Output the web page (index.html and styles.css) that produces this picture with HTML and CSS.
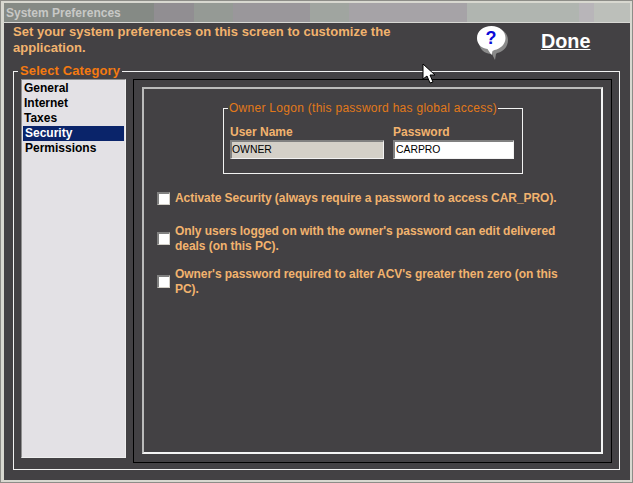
FILE: index.html
```html
<!DOCTYPE html>
<html lang="en">
<head>
<meta charset="utf-8">
<title>System Preferences</title>
<link rel="stylesheet" href="styles.css">
</head>
<body>
<div class="window">
  <div class="titlebar">System Preferences</div>
  <div class="client">
    <header class="intro">
      <p class="intro-text">Set your system preferences on this screen to customize the application.</p>
      <svg class="help" width="34" height="36" viewBox="0 0 34 36" aria-label="Help">
        <path class="help-shadow" d="M18 3c9 0 14 6 14 12 0 7-5 12-11 13l-1 1-1 6-3-6C8 29 3 24 3 16 3 8 9 3 18 3z"/>
        <path class="help-bubble" d="M15.500 1c8 0 14 5 14 12 0 6-5 11-11 12l-2 1-1 4-4-6C5 23 1 19 1 13 1 6 7 1 15.500 1z"/>
        <text class="help-mark" x="15" y="18.500" text-anchor="middle">?</text>
      </svg>
      <a class="done">Done</a>
    </header>
    <fieldset class="category">
      <legend>Select Category</legend>
      <ul class="list">
        <li>General</li>
        <li>Internet</li>
        <li>Taxes</li>
        <li class="selected">Security</li>
        <li>Permissions</li>
      </ul>
      <div class="panel">
        <div class="panel-inner">
          <fieldset class="logon">
            <legend>Owner Logon (this password has global access)</legend>
            <div class="field user">
              <label>User Name</label>
              <div class="input disabled">OWNER</div>
            </div>
            <div class="field">
              <label>Password</label>
              <div class="input">CARPRO</div>
            </div>
          </fieldset>
          <div class="option first"><span class="check"></span><span>Activate Security (always require a password to access CAR_PRO).</span></div>
          <div class="option second"><span class="check"></span><span>Only users logged on with the owner's password can edit delivered deals (on this PC).</span></div>
          <div class="option third"><span class="check"></span><span>Owner's password required to alter ACV's greater then zero (on this PC).</span></div>
        </div>
      </div>
    </fieldset>
  </div>
  <svg class="cursor" width="14" height="21" viewBox="0 0 14 21">
    <path d="M1 1v15l4-3 3 7 3-1-3-7h5z" fill="#fff" stroke="#000" stroke-width="1"/>
  </svg>
</div>
</body>
</html>
```

FILE: styles.css
```css
* { box-sizing: border-box; }
html, body { margin: 0; padding: 0; }
body {
  width: 633px;
  height: 483px;
  overflow: hidden;
  background: #434144;
  font-family: "Liberation Sans", Arial, sans-serif;
}
.window {
  position: relative;
  width: 633px;
  height: 483px;
  display: flex;
  flex-direction: column;
  border-style: solid;
  border-color: #d8d8d0;
  border-width: 3px 3px 3px 4px;
  outline: 1px solid #8d8d88;
  outline-offset: -1px;
}
.titlebar {
  height: 20px;
  flex: none;
  padding: 3px 0 0 2px;
  font-size: 12px;
  font-weight: 700;
  line-height: 14px;
  color: #c8c8c6;
  border-bottom: 1px solid #d8d8d4;
  background: linear-gradient(90deg,
    #858a85 0, #858a85 150px,
    #918e92 150px, #918e92 190px,
    #959a95 190px, #959a95 229px,
    #9a979b 229px, #9a979b 306px,
    #a0a5a0 306px, #a0a5a0 345px,
    #a6a3a7 345px, #a6a3a7 463px,
    #b0b5b0 463px, #b0b5b0 575px,
    #b8b5b9 575px, #b8b5b9 590px,
    #bcbfba 590px);
}
.client {
  flex: 1;
  display: flex;
  flex-direction: column;
  min-height: 0;
  padding: 0 10px 10px 9px;
  background: #434144;
}
.intro {
  height: 40px;
  flex: none;
  display: flex;
  align-items: flex-start;
}
.intro-text {
  width: 396px;
  margin: 1px 0 0;
  font-size: 13px;
  line-height: 16px;
  font-weight: 700;
  letter-spacing: 0.03px;
  color: #f2b36e;
}
.help {
  flex: none;
  margin: 2px 0 0 67px;
}
.help-shadow { fill: #8a8a8a; }
.help-bubble { fill: #fff; }
.help-mark {
  font-size: 18px;
  font-weight: 700;
  fill: #0a0ad8;
  font-family: "Liberation Sans", Arial, sans-serif;
}
.done {
  margin: 6px 0 0 31px;
  font-size: 19.800px;
  line-height: 24px;
  font-weight: 700;
  color: #fff;
  text-decoration: underline;
}
.category {
  position: relative;
  flex: 1;
  min-height: 0;
  margin: 0;
  display: flex;
  gap: 7px;
  padding: 0 7px 7px 7px;
  border: 1px solid #f2f2f2;
}
.category > legend {
  margin-left: -3px;
  padding: 0 2px;
  font-size: 13px;
  line-height: 16px;
  font-weight: 700;
  letter-spacing: 0.12px;
  color: #f57a10;
}
.list {
  width: 105px;
  margin: 0;
  padding: 1px 1px 0;
  list-style: none;
  flex: none;
  height: 379px;
  background: #e3e1e5;
  border: 1px solid #eee;
  border-top-color: #8f8f8f;
  border-left-color: #8f8f8f;
  font-size: 12px;
  font-weight: 700;
  color: #000;
}
.list li {
  height: 15px;
  line-height: 15px;
  padding-left: 1px;
}
.list .selected {
  background: #0a246a;
  color: #fff;
  padding-left: 2px;
}
.list li:last-child { padding-left: 2px; }
.panel {
  flex: 1;
  height: 384px;
  padding: 7px 8px 8px;
  border: 1px solid #000;
}
.panel-inner {
  height: 367px;
  border: 2px solid #f4f4f4;
  border-color: #bbb #f4f4f4 #f4f4f4 #bbb;
  display: flex;
  flex-direction: column;
  padding: 12px 0 0 13px;
}
.logon {
  width: 300px;
  height: 73px;
  margin: 0 0 0 66px;
  padding: 10px 0 0 6px;
  display: flex;
  gap: 9px;
  border: 1px solid #f2f2f2;
  flex: none;
}
.logon legend {
  margin-left: -2px;
  padding: 0 1px;
  font-size: 12px;
  line-height: 14px;
  font-weight: 400;
  letter-spacing: 0.28px;
  color: #e2791a;
}
.field { display: flex; flex-direction: column; }
.field label {
  font-size: 12px;
  line-height: 14px;
  font-weight: 700;
  color: #f2b36e;
  margin-bottom: 1px;
}
.input {
  width: 121px;
  height: 19px;
  padding-left: 1px;
  font-size: 10.400px;
  line-height: 16px;
  font-weight: 400;
  color: #000;
  background: #fff;
  border: 1px solid #f2f2f2;
  border-top: 2px solid #808080;
  border-left: 2px solid #808080;
}
.disabled { width: 154px; background: #d4d0c8; padding-left: 0; }
.option {
  display: flex;
  align-items: center;
  gap: 5px;
  width: 410px;
  font-size: 12px;
  line-height: 15px;
  font-weight: 700;
  letter-spacing: -0.05px;
  color: #f2b36e;
}
.first { margin-top: 17px; }
.second { margin-top: 18px; }
.third { margin-top: 13px; }
.check {
  flex: none;
  width: 13px;
  height: 13px;
  background: #fff;
  border-top: 2px solid #808080;
  border-left: 2px solid #808080;
  border-right: 1px solid #d4d0c8;
  border-bottom: 1px solid #d4d0c8;
}
.second .check, .third .check { margin-bottom: 2px; }
.cursor {
  position: absolute;
  left: 418px;
  top: 60px;
}
```
